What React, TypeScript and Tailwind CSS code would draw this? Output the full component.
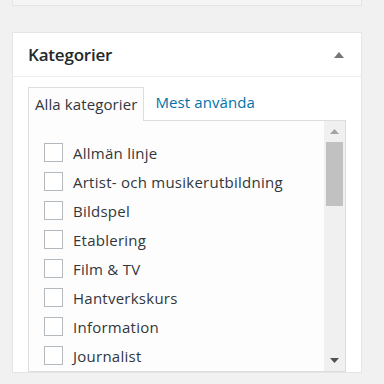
import React from "react";

const categories = [
  "Allmän linje",
  "Artist- och musikerutbildning",
  "Bildspel",
  "Etablering",
  "Film & TV",
  "Hantverkskurs",
  "Information",
  "Journalist",
];

export default function App() {
  return (
    <div
      className="h-[384px] w-[384px] overflow-hidden bg-[#f1f1f1] pl-[12px]"
      style={{ fontFamily: '"Open Sans", "Noto Sans", sans-serif' }}
    >
      {/* previous box, only its bottom edge is visible */}
      <div className="h-[6px] w-[350px] border-x border-b border-[#e5e5e5] bg-[#f5f5f5]" />

      <div className="mt-[26px] w-[350px] border border-[#e5e5e5] bg-white">
        <div className="flex h-[44px] items-center justify-between border-b border-[#eeeeee] pl-[15px] pr-[17px]">
          <h2 className="text-[17px] font-semibold leading-none text-[#23282d] tracking-[-0.2px]">
            Kategorier
          </h2>
          <svg width="10" height="6" viewBox="0 0 10 6">
            <path d="M0 6 L5 0 L10 6 Z" fill="#72777c" />
          </svg>
        </div>

        <div className="px-[15px] pt-[10px]">
          <div className="flex items-end">
            <div className="relative -mb-px h-[34px] border-x border-t border-[#dddddd] bg-[#fdfdfd] px-[6px] pt-[5px] text-[15px] tracking-[0.1px] text-[#32373c]">
              Alla kategorier
            </div>
            <div className="pb-[7px] pl-[11px] text-[15px] tracking-[0.1px] text-[#0073aa]">Mest använda</div>
          </div>

          <div className="flex h-[252px] w-[318px] border border-[#dddddd] bg-[#fdfdfd]">
            <ul className="flex-1 overflow-hidden pl-[15px] pt-[17px]">
              {categories.map((name) => (
                <li key={name} className="flex h-[29px] items-center gap-[10px]">
                  <span className="h-[19px] w-[19px] shrink-0 border border-[#b4b9be] bg-white" />
                  <span className="pt-[2px] text-[15px] tracking-[0.25px] text-[#32373c] whitespace-nowrap">
                    {name}
                  </span>
                </li>
              ))}
            </ul>
            <div className="flex w-[21px] flex-col bg-[#f0f0f0]">
              <div className="flex h-[21px] items-center justify-center">
                <svg width="9" height="5" viewBox="0 0 9 5">
                  <path d="M0 5 L4.5 0 L9 5 Z" fill="#a3a3a3" />
                </svg>
              </div>
              <div className="mx-[2px] h-[64px] bg-[#c1c1c1]" />
              <div className="flex-1" />
              <div className="flex h-[22px] items-center justify-center">
                <svg width="9" height="5" viewBox="0 0 9 5">
                  <path d="M0 0 L9 0 L4.5 5 Z" fill="#505050" />
                </svg>
              </div>
            </div>
          </div>
        </div>
      </div>
    </div>
  );
}
